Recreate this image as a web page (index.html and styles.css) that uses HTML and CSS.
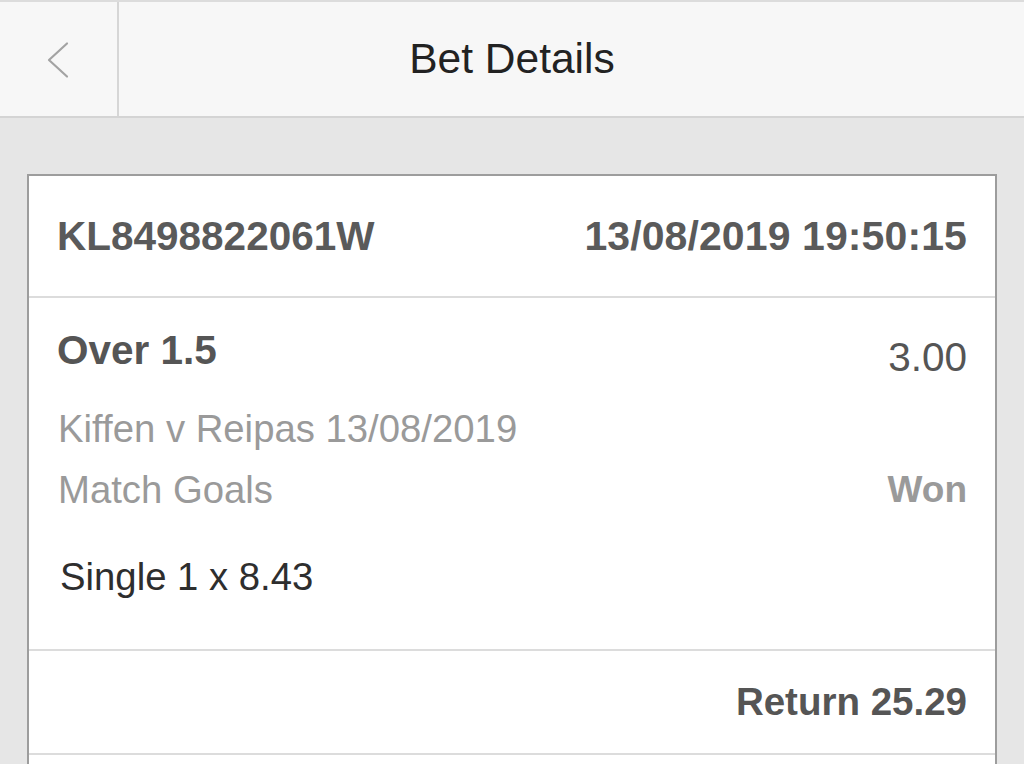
FILE: index.html
```html
<!DOCTYPE html>
<html lang="en">
<head>
<meta charset="utf-8">
<title>Bet Details</title>
<link rel="stylesheet" href="styles.css">
</head>
<body>
<header class="topbar">
  <div class="back">
    <svg class="chevron" width="24" height="38" viewBox="0 0 24 38" aria-hidden="true">
      <polyline points="21,2.5 3,19 21,35.5" fill="none" stroke="#a3a3a3" stroke-width="2.2" stroke-linecap="round" stroke-linejoin="round"/>
    </svg>
  </div>
  <h1 class="title">Bet Details</h1>
  <div class="spacer"></div>
</header>
<main class="page">
  <section class="card">
    <div class="row head">
      <span class="ref">KL8498822061W</span>
      <span class="date">13/08/2019 19:50:15</span>
    </div>
    <div class="selection">
      <div class="sel-top">
        <span class="market-name">Over 1.5</span>
        <span class="odds">3.00</span>
      </div>
      <div class="line muted">Kiffen v Reipas 13/08/2019</div>
      <div class="line muted split">
        <span>Match Goals</span>
        <span class="status">Won</span>
      </div>
      <div class="line dark">Single 1 x 8.43</div>
    </div>
    <div class="row ret">
      <span class="return">Return 25.29</span>
    </div>
    <div class="row tail"></div>
  </section>
</main>
</body>
</html>
```
FILE: styles.css
```css
* { box-sizing: border-box; }
html, body {
  margin: 0;
  padding: 0;
  height: 100%;
}
body {
  font-family: "Liberation Sans", Arial, Helvetica, sans-serif;
  background: #e6e6e6;
  overflow: hidden;
}
.topbar {
  display: grid;
  grid-template-columns: 119px 1fr 119px;
  height: 118px;
  background: #f7f7f7;
  border-top: 2px solid #dcdcdc;
  border-bottom: 2px solid #d4d4d4;
}
.back {
  display: flex;
  align-items: center;
  justify-content: center;
  border-right: 2px solid #d6d6d6;
}
.chevron { display: block; margin-top: 1px; margin-right: 1px; }
.title {
  margin: 0;
  display: flex;
  align-items: center;
  justify-content: center;
  font-size: 42.5px;
  font-weight: normal;
  color: #222;
}
.page {
  padding: 56px 27px 0 27px;
}
.card {
  background: #fff;
  border: 2px solid #9d9d9d;
  border-bottom: none;
}
.row {
  display: flex;
  align-items: center;
  justify-content: space-between;
  padding: 0 28px;
  border-bottom: 2px solid #dcdcdc;
}
.head {
  height: 122px;
  font-weight: bold;
  color: #5a5a5a;
}
.ref { font-size: 40.5px; }
.date { font-size: 41px; letter-spacing: 0.1px; }
.selection {
  padding: 28px 28px 42px 28px;
  border-bottom: 2px solid #dcdcdc;
}
.sel-top {
  display: flex;
  justify-content: space-between;
  align-items: flex-start;
  height: 48px;
  line-height: 48px;
  margin-bottom: 24px;
}
.market-name {
  font-size: 40.5px;
  font-weight: bold;
  color: #555;
}
.odds {
  font-size: 40.5px;
  color: #555;
  padding-top: 7px;
}
.line {
  font-size: 38.3px;
  line-height: 61px;
  height: 61px;
  white-space: nowrap;
  padding-left: 1px;
}
.muted { color: #9a9a9a; }
.split {
  display: flex;
  justify-content: space-between;
  margin-bottom: 26px;
}
.status {
  font-weight: bold;
  font-size: 37px;
  color: #9a9a9a;
}
.dark { color: #2e2e2e; padding-left: 3px; }
.ret {
  height: 104px;
  justify-content: flex-end;
}
.return {
  font-size: 38.5px;
  font-weight: bold;
  color: #555;
}
.tail {
  height: 60px;
  border-bottom: none;
}
```
